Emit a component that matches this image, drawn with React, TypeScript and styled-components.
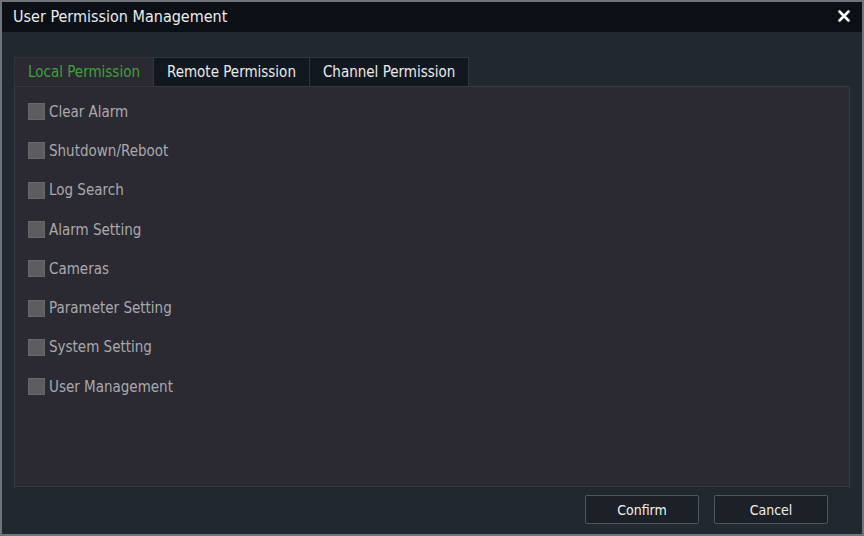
import styled, { createGlobalStyle } from "styled-components";

const GlobalStyle = createGlobalStyle`
  html, body {
    margin: 0;
    padding: 0;
    background: #6f7479;
  }
  * {
    box-sizing: border-box;
  }
`;

const Window = styled.div`
  width: 864px;
  height: 536px;
  display: flex;
  flex-direction: column;
  border: 2px solid #6f7479;
  background: #22282f;
  font-family: "DejaVu Sans Condensed", "DejaVu Sans", sans-serif;
`;

const TitleBar = styled.div`
  height: 30px;
  flex: none;
  display: flex;
  align-items: center;
  justify-content: space-between;
  padding: 0 10px 2px 11px;
  background: #0b1016;
  color: #ececec;
  font-size: 16px;
`;

const CloseButton = styled.button`
  width: 16px;
  height: 16px;
  padding: 0;
  border: none;
  background: none;
  display: flex;
  align-items: center;
  justify-content: center;
  cursor: pointer;
`;

const Body = styled.div`
  flex: 1;
  display: flex;
  flex-direction: column;
  padding: 25px 12px 0 12px;
`;

const TabRow = styled.div`
  display: flex;
  height: 29px;
`;

const Tab = styled.div<{ $active?: boolean }>`
  display: flex;
  align-items: center;
  justify-content: center;
  padding: 0 13px 1px;
  font-size: 15px;
  color: ${(p) => (p.$active ? "#3fa13a" : "#eaeaea")};
  background: ${(p) => (p.$active ? "#2b2a33" : "#121820")};
  border: 1px solid #30353d;
  border-bottom: none;
  & + & {
    border-left: none;
  }
`;

const Panel = styled.div`
  height: 401px;
  display: flex;
  flex-direction: column;
  padding: 5px 13px;
  background: #2b2a33;
  border: 1px solid #343941;
`;

const Option = styled.label`
  height: 39.3px;
  display: flex;
  align-items: center;
  gap: 4px;
  font-size: 15px;
  color: #a9a9ab;
  cursor: pointer;
`;

const Box = styled.span`
  width: 17px;
  height: 17px;
  flex: none;
  background: #5d5d5f;
  border: 1px solid #68686a;
`;

const Footer = styled.div`
  flex: 1;
  display: flex;
  justify-content: flex-end;
  align-items: center;
  gap: 15px;
  padding-right: 22px;
  padding-bottom: 2px;
`;

const FooterButton = styled.button`
  width: 114px;
  height: 29px;
  background: #1c2128;
  border: 1px solid #50565d;
  border-radius: 2px;
  color: #f0f0f0;
  font-family: inherit;
  font-size: 14px;
  cursor: pointer;
`;

const options = [
  "Clear Alarm",
  "Shutdown/Reboot",
  "Log Search",
  "Alarm Setting",
  "Cameras",
  "Parameter Setting",
  "System Setting",
  "User Management",
];

export default function App() {
  return (
    <>
      <GlobalStyle />
      <Window>
        <TitleBar>
          <span>User Permission Management</span>
          <CloseButton>
            <svg width="12" height="12" viewBox="0 0 12 12">
              <path
                d="M1.5 1.5 L10.5 10.5 M10.5 1.5 L1.5 10.5"
                stroke="#ffffff"
                strokeWidth="2.6"
                strokeLinecap="round"
              />
            </svg>
          </CloseButton>
        </TitleBar>
        <Body>
          <TabRow>
            <Tab $active>Local Permission</Tab>
            <Tab>Remote Permission</Tab>
            <Tab>Channel Permission</Tab>
          </TabRow>
          <Panel>
            {options.map((o) => (
              <Option key={o}>
                <Box />
                {o}
              </Option>
            ))}
          </Panel>
          <Footer>
            <FooterButton>Confirm</FooterButton>
            <FooterButton>Cancel</FooterButton>
          </Footer>
        </Body>
      </Window>
    </>
  );
}
